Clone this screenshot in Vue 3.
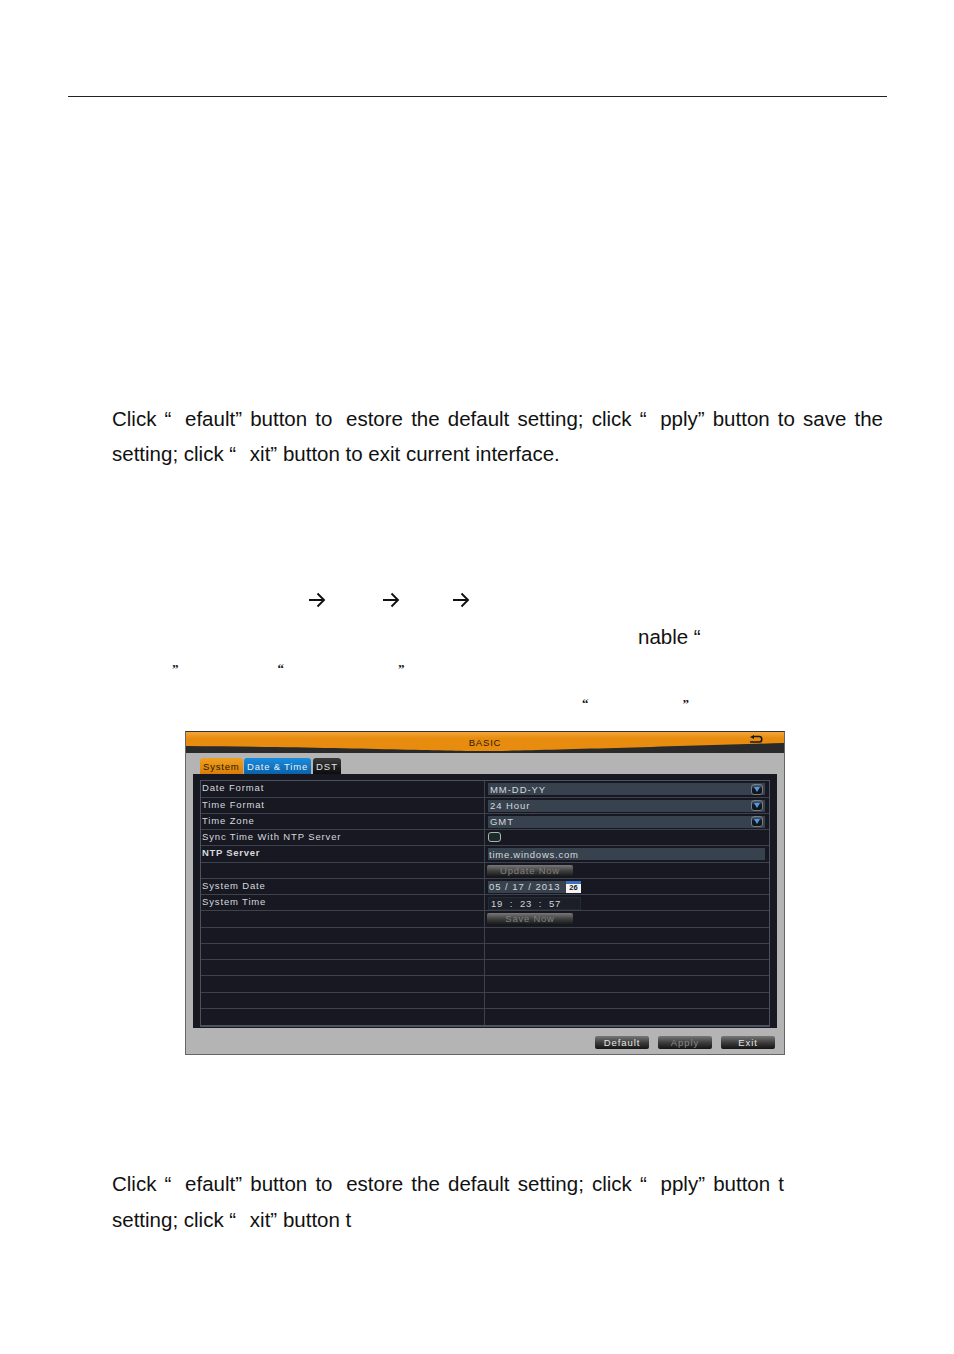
<script setup>
const rows = [
  { label: 'Date Format', type: 'select', value: 'MM-DD-YY' },
  { label: 'Time Format', type: 'select', value: '24 Hour' },
  { label: 'Time Zone', type: 'select', value: 'GMT' },
  { label: 'Sync Time With NTP Server', type: 'check' },
  { label: 'NTP Server', type: 'input', value: 'time.windows.com', strong: true },
  { label: '', type: 'button', value: 'Update Now' },
  { label: 'System Date', type: 'date', value: '05 / 17 / 2013' },
  { label: 'System Time', type: 'time', value: '19  :  23  :  57' },
  { label: '', type: 'button', value: 'Save Now' },
  { label: '', type: 'empty' },
  { label: '', type: 'empty' },
  { label: '', type: 'empty' },
  { label: '', type: 'empty' },
  { label: '', type: 'empty' },
  { label: '', type: 'empty' }
]

const tabs = [
  { name: 'System', cls: 'orange' },
  { name: 'Date & Time', cls: 'blue' },
  { name: 'DST', cls: 'black' }
]

const arrowClasses = ['first', 'second', 'third']
</script>

<template>
  <div class="page">
    <div class="head-rule"></div>

    <p class="para top">
      <span class="just">Click “<i class="gap"></i> efault” button to <i class="gap"></i>estore the default setting; click “<i class="gap"></i> pply” button to save the</span>
      <span class="plain">setting; click “<i class="gap wide"></i> xit” button to exit current interface.</span>
    </p>

    <div class="arrows">
      <svg v-for="a in arrowClasses" :key="a" :class="['arrow', a]" width="18" height="16" viewBox="0 0 18 16">
        <path d="M1 8H16M9.5 1.5L16 8L9.5 14.5" fill="none" stroke="#111" stroke-width="1.9" />
      </svg>
    </div>

    <div class="frag-line nable">nable “</div>
    <div class="quote-line one"><span>”</span><span class="q2">“</span><span class="q3">”</span></div>
    <div class="quote-line two"><span>“</span><span class="q4">”</span></div>

    <div class="dvr">
      <div class="titlebar">
        <svg class="swoosh" viewBox="0 0 600 21" preserveAspectRatio="none">
          <path d="M0 14C150 15 260 19 300 19C340 19 500 14 600 11V21H0Z" fill="#2a2a2a" />
        </svg>
        <span class="title">BASIC</span>
        <svg class="back" width="14" height="9" viewBox="0 0 14 9">
          <path d="M4 1.5H10.5C13.5 1.5 13.5 7 10.5 7H1" fill="none" stroke="#1a1a1a" stroke-width="1.6" />
          <path d="M5 0L1 2L5 4Z" fill="#1a1a1a" />
        </svg>
      </div>

      <div class="tabs">
        <div v-for="t in tabs" :key="t.name" :class="['tab', t.cls]">{{ t.name }}</div>
      </div>

      <div class="panel">
        <div class="grid">
          <div v-for="(r, i) in rows" :key="i" class="row">
            <div :class="['left', { strong: r.strong }]">{{ r.label }}</div>
            <div class="right">
              <div v-if="r.type === 'select'" class="field select">
                <span>{{ r.value }}</span>
                <i class="drop"><b></b></i>
              </div>
              <div v-else-if="r.type === 'check'" class="check"></div>
              <div v-else-if="r.type === 'input'" class="field input"><span>{{ r.value }}</span></div>
              <div v-else-if="r.type === 'button'" class="btn wide">{{ r.value }}</div>
              <div v-else-if="r.type === 'date'" class="field date">
                <span>{{ r.value }}</span>
                <i class="cal">26</i>
              </div>
              <div v-else-if="r.type === 'time'" class="timebox">{{ r.value }}</div>
            </div>
          </div>
        </div>
      </div>

      <div class="actions">
        <div class="btn action">Default</div>
        <div class="btn action off">Apply</div>
        <div class="btn action">Exit</div>
      </div>
    </div>

    <p class="para bottom">
      <span class="just">Click “<i class="gap"></i> efault” button to <i class="gap"></i>estore the default setting; click “<i class="gap"></i> pply” button t</span>
      <span class="plain">setting; click “<i class="gap wide"></i> xit” button t</span>
    </p>
  </div>
</template>

<style>
html, body {
  margin: 0;
  background: #fff;
}
</style>

<style scoped>
.page {
  width: 954px;
  height: 1354px;
  padding-top: 96px;
  box-sizing: border-box;
  font-family: "Liberation Sans", Arial, sans-serif;
  color: #111;
  overflow: hidden;
}

.head-rule {
  margin-left: 68px;
  width: 819px;
  border-top: 1px solid #222;
}

.para {
  margin: 0 0 0 112px;
  font-size: 20.5px;
  line-height: 36px;
}

.para span {
  display: block;
  white-space: nowrap;
}

.para .just {
  white-space: normal;
  text-align: justify;
  text-align-last: justify;
}

.gap {
  display: inline-block;
  width: 5.5px;
}

.gap.wide {
  width: 8px;
}

.top {
  width: 771px;
  margin-top: 304px;
  line-height: 35px;
}

.bottom {
  width: 672px;
  margin-top: 111px;
}

.arrows {
  display: flex;
  height: 36px;
  margin-top: 111px;
  align-items: center;
}

.arrow.first { margin-left: 308px; }
.arrow.second { margin-left: 56px; }
.arrow.third { margin-left: 52px; }

.frag-line {
  font-size: 20.5px;
  line-height: 36px;
  height: 36px;
  margin-left: 638px;
  margin-top: 1px;
}

.quote-line {
  display: flex;
  font-size: 13px;
  font-weight: bold;
  font-family: "Liberation Serif", serif;
  line-height: 16px;
  height: 16px;
}

.quote-line.one {
  padding-left: 172px;
  margin-top: 6px;
}

.quote-line.two {
  padding-left: 582px;
  margin-top: 19px;
}

.q2 { margin-left: 99px; }
.q3 { margin-left: 114px; }
.q4 { margin-left: 94px; }

.dvr {
  width: 600px;
  height: 324px;
  margin: 19px 0 0 185px;
  box-sizing: border-box;
  border: 1px solid #666;
  border-top-color: #333;
  background: #b4b4b4;
  display: flex;
  flex-direction: column;
  font-family: "Liberation Sans", Arial, sans-serif;
}

.titlebar {
  position: relative;
  height: 21px;
  flex: none;
  background: linear-gradient(#f2a63a, #e88c10 30%, #e88c10);
  display: flex;
  align-items: center;
  justify-content: center;
}

.swoosh {
  position: absolute;
  left: 0;
  top: 0;
  width: 100%;
  height: 100%;
}

.title {
  position: relative;
  font-size: 9.5px;
  letter-spacing: 0.8px;
  color: #2a1a00;
  margin-top: -1px;
}

.back {
  position: absolute;
  right: 21px;
  top: 3px;
}

.tabs {
  display: flex;
  gap: 1px;
  height: 16px;
  margin: 5px 0 0 14px;
  flex: none;
}

.tab {
  font-size: 9.5px;
  line-height: 17px;
  letter-spacing: 0.8px;
  padding: 0 3px;
  border-radius: 3px 3px 0 0;
  white-space: nowrap;
}

.tab.orange {
  width: 37px;
  background: linear-gradient(#f0a020, #d87e08);
  color: #2a1800;
}

.tab.blue {
  width: 61px;
  background: linear-gradient(#1a8ce0, #0a62a8);
  color: #e8f2fa;
}

.tab.black {
  width: 22px;
  margin-left: 1px;
  background: linear-gradient(#3a3a3a, #0c0c0c);
  color: #e4e4e4;
  letter-spacing: 1px;
}

.panel {
  margin: 0 7px 0 7px;
  height: 254px;
  flex: none;
  background: #171822;
  padding: 6.3px 7px 0 7px;
  box-sizing: border-box;
}

.grid {
  border: 1px solid #4a525c;
  border-bottom-width: 2px;
  display: grid;
  grid-auto-rows: 16.25px;
}

.row {
  display: grid;
  grid-template-columns: 284px 1fr;
  border-bottom: 1px solid #3c434c;
  box-sizing: border-box;
}

.row:last-child {
  border-bottom: 0;
}

.left {
  font-size: 9.5px;
  letter-spacing: 0.85px;
  line-height: 14px;
  padding-left: 1px;
  color: #d6d9dc;
  border-right: 1px solid #3c434c;
  white-space: nowrap;
}

.left.strong {
  color: #d8dadc;
  font-weight: bold;
  letter-spacing: 0.7px;
}

.right {
  position: relative;
  padding: 2px 0 0 3px;
  box-sizing: border-box;
  min-width: 0;
}

.field {
  height: 12px;
  background: #38424e;
  color: #d4d8dc;
  font-size: 9.5px;
  letter-spacing: 0.95px;
  line-height: 13px;
  padding-left: 2px;
  box-sizing: border-box;
  display: flex;
  align-items: center;
  justify-content: space-between;
}

.select {
  width: 277px;
  padding-right: 2px;
}

.input {
  width: 277px;
  padding-left: 1px;
  letter-spacing: 0.75px;
}

.drop {
  width: 12px;
  height: 11px;
  background: linear-gradient(#59626e, #14161a 45%);
  border: 1px solid #707c88;
  border-radius: 3px;
  box-sizing: border-box;
  display: flex;
  align-items: center;
  justify-content: center;
}

.drop b {
  width: 0;
  height: 0;
  border-left: 3.5px solid transparent;
  border-right: 3.5px solid transparent;
  border-top: 5px solid #4a9cf0;
}

.check {
  width: 13px;
  height: 10px;
  border: 1px solid #aab4b0;
  border-radius: 3px;
  background: #1c2a2a;
  box-sizing: border-box;
}

.date {
  width: 93px;
  justify-content: space-between;
  padding-left: 1px;
  padding-right: 0;
  letter-spacing: 0.95px;
}

.date span {
  white-space: nowrap;
}

.cal {
  width: 15px;
  height: 12px;
  flex: none;
  background: linear-gradient(#3f6fc0 0 3px, #f2f4f8 3px);
  color: #111;
  font-style: normal;
  font-weight: bold;
  font-size: 7.5px;
  letter-spacing: 0;
  line-height: 14px;
  text-align: center;
}

.timebox {
  width: 93px;
  height: 13px;
  background: #1c1e28;
  border: 1px solid #262a34;
  box-sizing: border-box;
  color: #d0d4d8;
  font-size: 9.5px;
  letter-spacing: 0.75px;
  line-height: 12px;
  padding-left: 2px;
  white-space: pre;
}

.btn {
  background: linear-gradient(#787878, #3e3e3e 50%, #141414);
  border-radius: 2px;
  text-align: center;
  font-size: 9.5px;
  letter-spacing: 0.75px;
  color: #808080;
  box-sizing: border-box;
}

.btn.wide {
  width: 86px;
  height: 12px;
  line-height: 11px;
  margin-left: -1px;
}

.actions {
  display: flex;
  gap: 9px;
  justify-content: flex-end;
  padding: 8px 9px 0 0;
}

.btn.action {
  width: 54px;
  height: 13px;
  line-height: 13px;
  color: #e4e4e4;
  letter-spacing: 0.9px;
}

.btn.action.off {
  color: #888;
}
</style>
